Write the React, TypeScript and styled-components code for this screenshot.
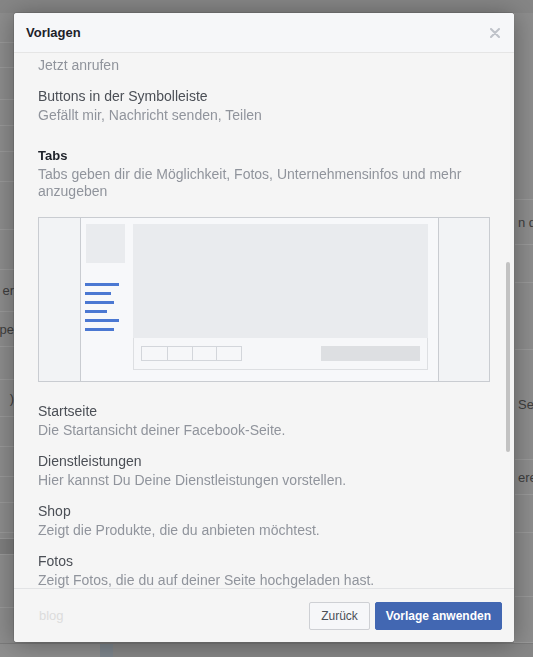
import styled, { createGlobalStyle } from 'styled-components';

const GlobalStyle = createGlobalStyle`
  html, body {
    margin: 0;
    padding: 0;
    width: 100%;
    height: 100%;
    overflow: hidden;
  }
  body {
    font-family: 'Liberation Sans', Helvetica, Arial, sans-serif;
    background: #8a8a8a;
  }
  * { box-sizing: border-box; }
`;

/* dimmed page behind the dialog */
const Page = styled.div`
  display: flex;
  flex-direction: column;
  height: 657px;
  background: #8a8a8a;
`;

const PageTop = styled.div`
  height: 13px;
  background: #868686;
`;

const PageBody = styled.div`
  flex: 1;
  display: flex;
`;

const Strip = styled.div<{ $width: number; $align: 'flex-start' | 'flex-end' }>`
  width: ${({ $width }) => $width}px;
  overflow: hidden;
  display: flex;
  flex-direction: column;
  align-items: ${({ $align }) => $align};
  background: #8d8d8d;
`;

const StripRow = styled.div<{ $height: number; $dark?: boolean }>`
  width: 100%;
  height: ${({ $height }) => $height}px;
  flex-shrink: 0;
  border-bottom: 1px solid #9a9a9a;
  background: ${({ $dark }) => ($dark ? '#7f7f7f' : 'transparent')};
  font-size: 13px;
  color: #3e3e3e;
  white-space: nowrap;
  overflow: hidden;
  display: flex;
  align-items: center;
  justify-content: inherit;
`;

const LeftRow = styled(StripRow)`
  justify-content: flex-end;
`;

const RightRow = styled(StripRow)`
  justify-content: flex-start;
  padding-left: 3px;
  border-left: 1px solid #999;
`;

const PageCenter = styled.div`
  flex: 1;
`;

const PageBottom = styled.div`
  height: 14px;
  display: flex;
`;

const BottomBlock = styled.div<{ $width?: number; $color: string }>`
  ${({ $width }) => ($width ? `width: ${$width}px;` : 'flex: 1;')}
  background: ${({ $color }) => $color};
  border-top: 1px solid #7b7b7b;
`;

/* dialog */
const Dialog = styled.div`
  position: fixed;
  left: 14px;
  top: 13px;
  width: 500px;
  height: 629px;
  display: flex;
  flex-direction: column;
  background: #f5f5f5;
  border-radius: 3px;
  box-shadow: 0 2px 26px rgba(0, 0, 0, 0.35), 0 0 0 1px rgba(0, 0, 0, 0.1);
  overflow: hidden;
`;

const Header = styled.div`
  height: 40px;
  display: flex;
  align-items: center;
  justify-content: space-between;
  padding: 0 13px 0 12px;
  background: #f6f7f9;
  border-bottom: 1px solid #e5e5e5;
`;

const Title = styled.h2`
  margin: 0;
  font-size: 13px;
  font-weight: bold;
  color: #1d2129;
`;

const Close = styled.button`
  border: 0;
  padding: 0;
  background: none;
  width: 12px;
  height: 12px;
  display: flex;
  align-items: center;
  justify-content: center;
`;

const Body = styled.div`
  position: relative;
  flex: 1;
  overflow: hidden;
  padding: 3px 24px 0 24px;
`;

const Scrollbar = styled.div`
  position: absolute;
  left: 492px;
  top: 209px;
  width: 4px;
  height: 190px;
  border-radius: 2px;
  background: #c2c2c2;
`;

const Item = styled.div<{ $gap?: number }>`
  margin-bottom: ${({ $gap }) => $gap ?? 13}px;
`;

const ItemTitle = styled.div<{ $strong?: boolean }>`
  font-size: ${({ $strong }) => ($strong ? 13 : 14)}px;
  font-weight: ${({ $strong }) => ($strong ? 'bold' : 'normal')};
  color: ${({ $strong }) => ($strong ? '#1d2129' : '#4b4f56')};
  line-height: 19px;
`;

const ItemText = styled.div`
  font-size: 14px;
  line-height: 17px;
  color: #90949c;
  margin-top: 1px;
`;

/* page preview drawing */
const Preview = styled.div`
  display: flex;
  height: 165px;
  margin: 17px 0 20px;
  border: 1px solid #c9ccd1;
  background: #f7f8fa;
`;

const PreviewSide = styled.div<{ $width: number; $edge: 'left' | 'right' }>`
  width: ${({ $width }) => $width}px;
  background: #f2f3f5;
  border-${({ $edge }) => $edge}: 1px solid #c9ccd1;
`;

const PreviewCenter = styled.div`
  flex: 1;
  display: flex;
  gap: 8px;
  padding: 6px 10px 0 5px;
`;

const PreviewNav = styled.div`
  width: 39px;
  display: flex;
  flex-direction: column;
`;

const ProfilePic = styled.div`
  width: 39px;
  height: 39px;
  background: #e9ebee;
  margin-bottom: 20px;
`;

const NavLine = styled.div<{ $width: number }>`
  width: ${({ $width }) => $width}px;
  height: 3px;
  margin: 0 0 6px -1px;
  background: #4b78d2;
`;

const PreviewMain = styled.div`
  flex: 1;
  display: flex;
  flex-direction: column;
`;

const Cover = styled.div`
  height: 114px;
  background: #e9ebee;
`;

const TabBar = styled.div`
  height: 32px;
  display: flex;
  align-items: center;
  justify-content: space-between;
  padding: 0 7px;
  border: 1px solid #dddfe2;
  border-top: 0;
  background: #f6f7f9;
`;

const TabBoxes = styled.div`
  display: flex;
  height: 15px;
  border: 1px solid #d3d6db;
`;

const TabBox = styled.div<{ $width: number }>`
  width: ${({ $width }) => $width}px;
  & + & {
    border-left: 1px solid #d3d6db;
  }
`;

const ActionBlock = styled.div`
  width: 99px;
  height: 15px;
  background: #dddfe2;
`;

/* footer */
const Footer = styled.div`
  height: 54px;
  display: flex;
  align-items: center;
  justify-content: space-between;
  padding: 0 12px 0 25px;
  border-top: 1px solid #e2e3e5;
  background: #f5f5f5;
`;

const Faded = styled.span`
  font-size: 13px;
  color: #dcdcdc;
`;

const Actions = styled.div`
  display: flex;
  gap: 5px;
`;

const Button = styled.button<{ $primary?: boolean }>`
  height: 28px;
  padding: 0 ${({ $primary }) => ($primary ? 10 : 11)}px;
  border-radius: 2px;
  font-family: inherit;
  font-size: 12px;
  font-weight: ${({ $primary }) => ($primary ? 'bold' : 'normal')};
  border: 1px solid ${({ $primary }) => ($primary ? '#4267b2' : '#ced0d4')};
  background: ${({ $primary }) => ($primary ? '#4267b2' : '#f6f7f9')};
  color: ${({ $primary }) => ($primary ? '#fff' : '#4b4f56')};
`;

const leftRows = [
  { h: 30, t: '' },
  { h: 25, t: '' },
  { h: 32, t: '' },
  { h: 26, t: '' },
  { h: 26, t: '' },
  { h: 30, t: '' },
  { h: 48, t: '' },
  { h: 40, t: '' },
  { h: 42, t: 'er' },
  { h: 35, t: 'pe' },
  { h: 33, t: '' },
  { h: 37, t: ')' },
  { h: 30, t: '' },
  { h: 30, t: '' },
  { h: 26, t: '' },
  { h: 30, t: '' },
  { h: 6, t: '' },
  { h: 16, t: '', dark: true },
  { h: 53, t: '' },
];

const rightRows = [
  { h: 187, t: '' },
  { h: 45, t: 'n de' },
  { h: 38, t: '' },
  { h: 67, t: '' },
  { h: 110, t: 'Se' },
  { h: 35, t: 'ere' },
  { h: 38, t: '' },
  { h: 64, t: '' },
  { h: 46, t: '' },
];

const navLines = [34, 26, 29, 22, 34, 29];
const tabs = [25, 25, 24, 25];

const items = [
  { title: 'Startseite', text: 'Die Startansicht deiner Facebook-Seite.' },
  { title: 'Dienstleistungen', text: 'Hier kannst Du Deine Dienstleistungen vorstellen.' },
  { title: 'Shop', text: 'Zeigt die Produkte, die du anbieten möchtest.' },
  { title: 'Fotos', text: 'Zeigt Fotos, die du auf deiner Seite hochgeladen hast.' },
];

export default function App() {
  return (
    <>
      <GlobalStyle />
      <Page>
        <PageTop />
        <PageBody>
          <Strip $width={14} $align='flex-end'>
            {leftRows.map((r, i) => (
              <LeftRow key={i} $height={r.h} $dark={r.dark}>
                {r.t}
              </LeftRow>
            ))}
          </Strip>
          <PageCenter />
          <Strip $width={19} $align='flex-start'>
            {rightRows.map((r, i) => (
              <RightRow key={i} $height={r.h}>
                {r.t}
              </RightRow>
            ))}
          </Strip>
        </PageBody>
        <PageBottom>
          <BottomBlock $width={100} $color='#8f8f8f' />
          <BottomBlock $width={13} $color='#7e868d' />
          <BottomBlock $color='#878787' />
        </PageBottom>
      </Page>

      <Dialog>
        <Header>
          <Title>Vorlagen</Title>
          <Close aria-label='Schließen'>
            <svg width='10' height='10' viewBox='0 0 10 10'>
              <path d='M1 1L9 9M9 1L1 9' stroke='#bec2c9' strokeWidth='2' strokeLinecap='round' />
            </svg>
          </Close>
        </Header>

        <Body>
          <Item>
            <ItemText>Jetzt anrufen</ItemText>
          </Item>
          <Item $gap={22}>
            <ItemTitle>Buttons in der Symbolleiste</ItemTitle>
            <ItemText>Gefällt mir, Nachricht senden, Teilen</ItemText>
          </Item>
          <div>
            <ItemTitle $strong>Tabs</ItemTitle>
            <ItemText>Tabs geben dir die Möglichkeit, Fotos, Unternehmensinfos und mehr anzugeben</ItemText>
          </div>

          <Preview>
            <PreviewSide $width={42} $edge='right' />
            <PreviewCenter>
              <PreviewNav>
                <ProfilePic />
                {navLines.map((w, i) => (
                  <NavLine key={i} $width={w} />
                ))}
              </PreviewNav>
              <PreviewMain>
                <Cover />
                <TabBar>
                  <TabBoxes>
                    {tabs.map((w, i) => (
                      <TabBox key={i} $width={w} />
                    ))}
                  </TabBoxes>
                  <ActionBlock />
                </TabBar>
              </PreviewMain>
            </PreviewCenter>
            <PreviewSide $width={51} $edge='left' />
          </Preview>

          {items.map(({ title, text }) => (
            <Item key={title}>
              <ItemTitle>{title}</ItemTitle>
              <ItemText>{text}</ItemText>
            </Item>
          ))}

          <Scrollbar />
        </Body>

        <Footer>
          <Faded>blog</Faded>
          <Actions>
            <Button>Zurück</Button>
            <Button $primary>Vorlage anwenden</Button>
          </Actions>
        </Footer>
      </Dialog>
    </>
  );
}
